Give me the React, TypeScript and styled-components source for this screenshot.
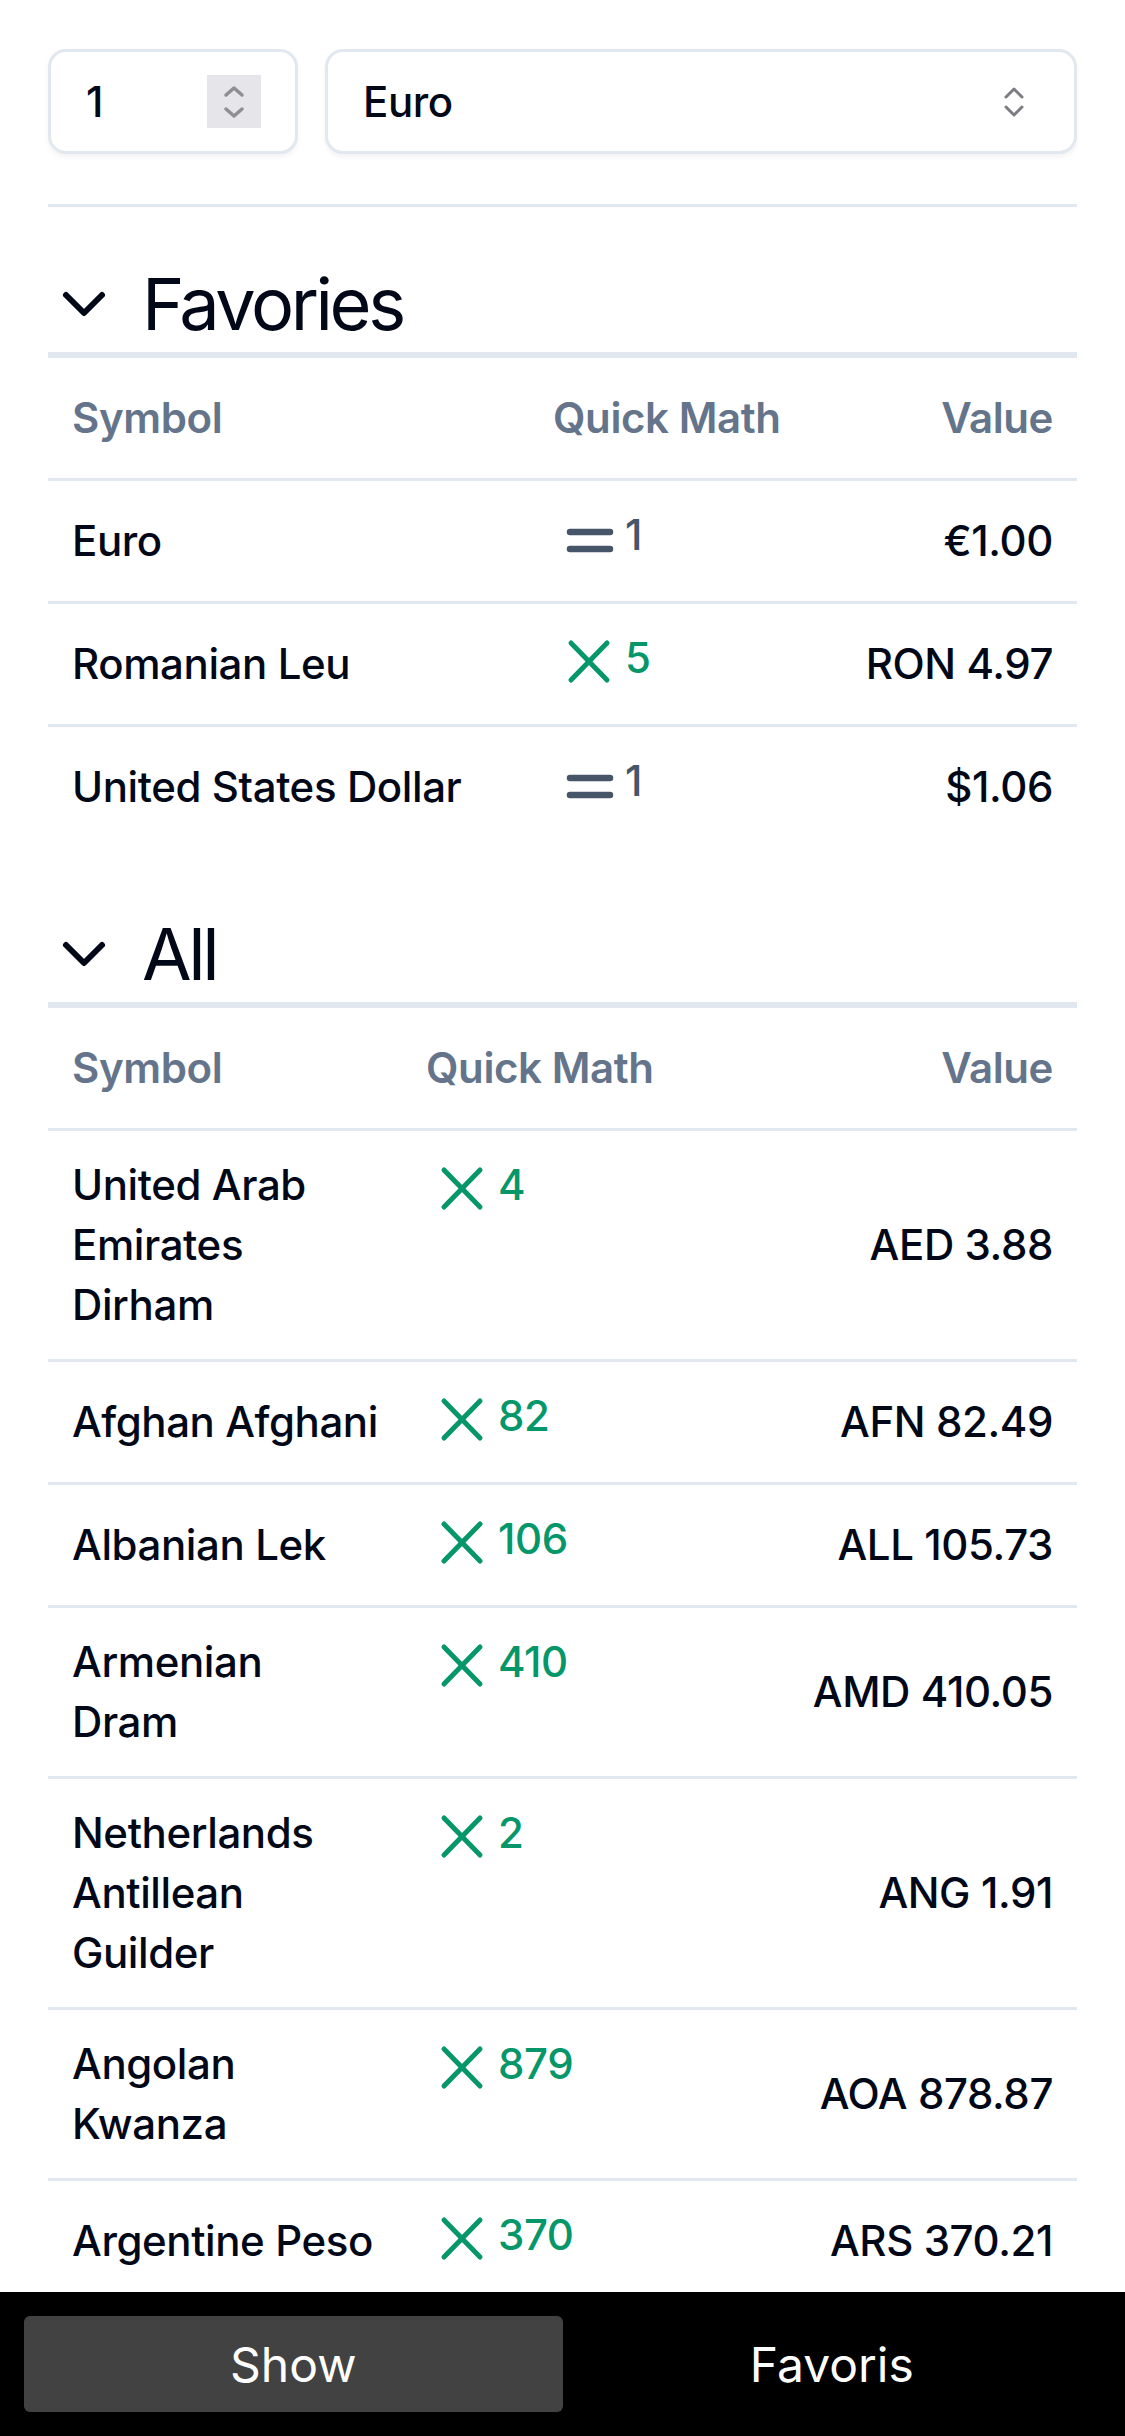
import React from "react";
import styled, { createGlobalStyle } from "styled-components";

const GlobalStyle = createGlobalStyle`
  * { box-sizing: border-box; }
  html, body { margin: 0; padding: 0; background: #ffffff; }
  body {
    font-family: Inter, "Noto Sans", "Liberation Sans", sans-serif;
    color: #020817;
    -webkit-font-smoothing: antialiased;
  }
`;

const Page = styled.main`
  padding: 49px 48px 0;
`;

const Controls = styled.div`
  display: grid;
  grid-template-columns: 250px 1fr;
  gap: 27px;
`;

const Field = styled.div`
  height: 105px;
  border: 3px solid #e2e8f0;
  border-radius: 18px;
  background: #ffffff;
  box-shadow: 0 3px 5px rgba(15, 23, 42, 0.05);
  display: flex;
  align-items: center;
  justify-content: space-between;
`;

const NumberField = styled(Field)`
  padding: 0 34px 0 35px;
`;

const SelectField = styled(Field)`
  padding: 0 50px 0 35px;
`;

const NumberInput = styled.input`
  border: none;
  outline: none;
  background: transparent;
  font-family: inherit;
  font-size: 42px;
  font-weight: 500;
  color: #020817;
  width: 100px;
  padding: 0;
`;

const Spinner = styled.div`
  width: 54px;
  height: 53px;
  background: #e5e5ea;
  display: flex;
  align-items: center;
  justify-content: center;
`;

const SelectText = styled.span`
  font-size: 42px;
  font-weight: 500;
  letter-spacing: -0.4px;
  color: #020817;
`;

const Divider = styled.hr`
  margin: 50px 0 0;
  border: none;
  height: 3px;
  background: #e2e8f0;
`;

const Section = styled.section<{ $top: number }>`
  margin-top: ${(p) => p.$top}px;
`;

const SectionHeading = styled.h2`
  margin: 0;
  height: 102px;
  display: flex;
  align-items: center;
  gap: 22px;
  border-bottom: 6px solid #e2e8f0;
  font-size: 72px;
  line-height: 96px;
  font-weight: 400;
  color: #020817;
  letter-spacing: -3.4px;
`;

const HeadRow = styled.div<{ $first: number }>`
  display: grid;
  grid-template-columns: ${(p) => p.$first}px 1fr auto;
  padding: 30px 0;
  border-bottom: 3px solid #e2e8f0;
`;

const HeadCell = styled.div<{ $right?: boolean }>`
  padding: 0 24px;
  font-size: 42px;
  line-height: 60px;
  font-weight: 600;
  letter-spacing: -0.4px;
  color: #64748b;
  text-align: ${(p) => (p.$right ? "right" : "left")};
`;

const Row = styled.div<{ $first: number }>`
  display: grid;
  grid-template-columns: ${(p) => p.$first}px 1fr auto;
  align-items: center;
  padding: 24px 0;
  & + & {
    border-top: 3px solid #e2e8f0;
  }
`;

const NameCell = styled.div`
  padding: 0 24px;
  font-size: 42px;
  line-height: 60px;
  font-weight: 500;
  letter-spacing: -0.4px;
  color: #020817;
  white-space: nowrap;
`;

const QuickCell = styled.div<{ $kind: "eq" | "x" }>`
  align-self: start;
  padding: 0 24px;
  display: flex;
  align-items: flex-start;
  min-height: 72px;
  color: ${(p) => (p.$kind === "eq" ? "#475569" : "#059669")};
`;

const QuickNum = styled.span`
  font-size: 42px;
  line-height: 60px;
  font-weight: 500;
  letter-spacing: -0.4px;
`;

const ValueCell = styled.div`
  padding: 0 24px;
  font-size: 42px;
  line-height: 60px;
  font-weight: 500;
  letter-spacing: -0.4px;
  color: #020817;
  text-align: right;
  white-space: nowrap;
`;

const BottomBar = styled.nav`
  position: fixed;
  left: 0;
  right: 0;
  bottom: 0;
  height: 144px;
  background: #000000;
  padding: 24px;
  display: grid;
  grid-template-columns: 1fr 1fr;
`;

const TabButton = styled.button<{ $active?: boolean }>`
  border: none;
  border-radius: 6px;
  background: ${(p) => (p.$active ? "#424242" : "transparent")};
  color: #ffffff;
  font-family: inherit;
  font-size: 48px;
  font-weight: 400;
  cursor: pointer;
`;

const ChevronDown = () => (
  <svg width="72" height="72" viewBox="0 0 24 24" fill="none" stroke="currentColor"
    strokeWidth="2" strokeLinecap="round" strokeLinejoin="round">
    <path d="m6 9 6 6 6-6" />
  </svg>
);

const SpinnerIcon = () => (
  <svg width="54" height="53" viewBox="0 0 54 53" fill="none" stroke="#8e8e93"
    strokeWidth="3.5" strokeLinecap="round" strokeLinejoin="round">
    <path d="M19 20 L27 13 L35 20" />
    <path d="M19 34 L27 41 L35 34" />
  </svg>
);

const SelectIcon = () => (
  <svg width="20" height="30" viewBox="0 0 20 30" fill="none" stroke="#7c7c82"
    strokeWidth="3" strokeLinecap="round" strokeLinejoin="round">
    <path d="M2 10 L10 2 L18 10" />
    <path d="M2 20 L10 28 L18 20" />
  </svg>
);

const EqualsIcon = () => (
  <svg width="72" height="72" viewBox="0 0 72 72" fill="none" stroke="currentColor"
    strokeWidth="6.5" strokeLinecap="round">
    <path d="M17 27 H57" />
    <path d="M17 44 H57" />
  </svg>
);

const TimesIcon = () => (
  <svg width="72" height="72" viewBox="0 0 72 72" fill="none" stroke="currentColor"
    strokeWidth="5" strokeLinecap="round">
    <path d="M18 15 L54 52" />
    <path d="M54 15 L18 52" />
  </svg>
);

type Currency = {
  name: string[];
  op: "eq" | "x";
  quick: string;
  value: string;
};

const favorites: Currency[] = [
  { name: ["Euro"], op: "eq", quick: "1", value: "€1.00" },
  { name: ["Romanian Leu"], op: "x", quick: "5", value: "RON 4.97" },
  { name: ["United States Dollar"], op: "eq", quick: "1", value: "$1.06" },
];

const all: Currency[] = [
  { name: ["United Arab", "Emirates", "Dirham"], op: "x", quick: "4", value: "AED 3.88" },
  { name: ["Afghan Afghani"], op: "x", quick: "82", value: "AFN 82.49" },
  { name: ["Albanian Lek"], op: "x", quick: "106", value: "ALL 105.73" },
  { name: ["Armenian", "Dram"], op: "x", quick: "410", value: "AMD 410.05" },
  { name: ["Netherlands", "Antillean", "Guilder"], op: "x", quick: "2", value: "ANG 1.91" },
  { name: ["Angolan", "Kwanza"], op: "x", quick: "879", value: "AOA 878.87" },
  { name: ["Argentine Peso"], op: "x", quick: "370", value: "ARS 370.21" },
];

const CurrencyTable = ({
  title,
  rows,
  first,
  top,
}: {
  title: string;
  rows: Currency[];
  first: number;
  top: number;
}) => (
  <Section $top={top}>
    <SectionHeading>
      <ChevronDown />
      {title}
    </SectionHeading>
    <HeadRow $first={first}>
      <HeadCell>Symbol</HeadCell>
      <HeadCell>Quick Math</HeadCell>
      <HeadCell $right>Value</HeadCell>
    </HeadRow>
    <div>
      {rows.map((r) => (
        <Row $first={first} key={r.value}>
          <NameCell>
            {r.name.map((line, i) => (
              <React.Fragment key={line}>
                {i > 0 && <br />}
                {line}
              </React.Fragment>
            ))}
          </NameCell>
          <QuickCell $kind={r.op}>
            {r.op === "eq" ? <EqualsIcon /> : <TimesIcon />}
            <QuickNum>{r.quick}</QuickNum>
          </QuickCell>
          <ValueCell>{r.value}</ValueCell>
        </Row>
      ))}
    </div>
  </Section>
);

export default function App() {
  return (
    <>
      <GlobalStyle />
      <Page>
        <Controls>
          <NumberField>
            <NumberInput value="1" readOnly />
            <Spinner>
              <SpinnerIcon />
            </Spinner>
          </NumberField>
          <SelectField>
            <SelectText>Euro</SelectText>
            <SelectIcon />
          </SelectField>
        </Controls>
        <Divider />
        <CurrencyTable title="Favories" rows={favorites} first={481} top={49} />
        <CurrencyTable title="All" rows={all} first={354} top={59} />
      </Page>
      <BottomBar>
        <TabButton $active>Show</TabButton>
        <TabButton>Favoris</TabButton>
      </BottomBar>
    </>
  );
}
